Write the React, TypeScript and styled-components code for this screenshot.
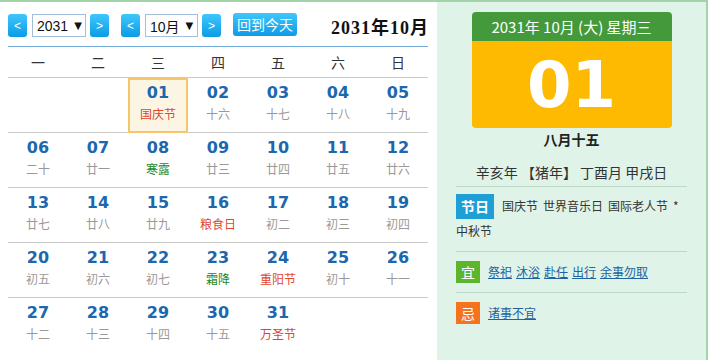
import React from "react";
import styled, { createGlobalStyle } from "styled-components";

const Global = createGlobalStyle`
  html, body { margin: 0; padding: 0; background: #fff; }
  body { font-family: "Noto Sans CJK SC", "Liberation Sans", sans-serif; color: #333; }
`;

const Frame = styled.div`
  width: 708px;
  height: 360px;
  box-sizing: border-box;
  border-top: 2px solid #a2d3a9;
  display: flex;
  overflow: hidden;
`;

const Left = styled.div`
  width: 437px;
  box-sizing: border-box;
  padding-left: 8px;
  padding-right: 9px;
  flex-shrink: 0;
`;

const Toolbar = styled.div`
  height: 45px;
  box-sizing: border-box;
  padding-top: 3px;
  display: flex;
  align-items: center;
  border-bottom: 1px solid #74acd9;
`;

const NavButton = styled.div<{ $gap?: number }>`
  width: 19px;
  height: 23px;
  border-radius: 3px;
  background: linear-gradient(#40c6fb, #0b9ce6);
  color: #fff;
  font-family: "Liberation Sans", sans-serif;
  font-size: 12px;
  display: flex;
  align-items: center;
  justify-content: center;
  margin-right: ${(p) => p.$gap ?? 0}px;
`;

const FakeSelect = styled.div<{ $w: number }>`
  width: ${(p) => p.$w}px;
  height: 23px;
  box-sizing: border-box;
  border: 1px solid #a4bfd9;
  background: #fff;
  display: flex;
  align-items: center;
  padding-left: 4px;
  margin: 0 4px 0 5px;
  font-family: "Liberation Sans", "Noto Sans CJK SC", sans-serif;
  font-size: 14px;
  color: #111;
  gap: 6px;
`;

const Arrow = styled.span`
  font-family: "DejaVu Sans", sans-serif;
  font-size: 10px;
  color: #111;
`;

const TodayButton = styled.div`
  height: 23px;
  padding: 0 4px;
  border-radius: 3px;
  background: linear-gradient(#40c6fb, #0b9ce6);
  color: #fff;
  font-size: 14px;
  line-height: 23px;
  margin-top: -2px;
`;

const Title = styled.div`
  margin-left: auto;
  font-family: "Liberation Serif", "Noto Sans CJK SC", serif;
  font-weight: bold;
  font-size: 18px;
  letter-spacing: 1px;
  color: #111;
  margin-right: -1px;
`;

const Grid = styled.div`
  display: grid;
  grid-template-columns: repeat(7, 60px);
`;

const HeadCell = styled.div`
  height: 30px;
  line-height: 30px;
  text-align: center;
  font-size: 14px;
  color: #333;
  border-bottom: 1px solid #c9c9c9;
`;

const DayCell = styled.div<{ $selected?: boolean; $last?: boolean }>`
  height: 55px;
  box-sizing: border-box;
  border-bottom: ${(p) => (p.$last ? "none" : "1px solid #c9c9c9")};
  padding-top: 5px;
  text-align: center;
  ${(p) =>
    p.$selected &&
    `
    background: #fdf5e4;
    outline: 2px solid #f6c76a;
    outline-offset: -2px;
  `}
`;

const DayNum = styled.div`
  font-family: "DejaVu Sans", sans-serif;
  font-weight: bold;
  font-size: 16px;
  line-height: 20px;
  color: #1c67ae;
`;

type Kind = "normal" | "fest" | "term";

const Lunar = styled.div<{ $kind: Kind }>`
  margin-top: 3px;
  font-size: 12px;
  line-height: 16px;
  color: ${(p) => (p.$kind === "fest" ? "#e2462a" : p.$kind === "term" ? "#23882b" : "#999")};
`;

const Right = styled.div`
  flex: 1;
  background: #e0f3e8;
  border-right: 2px solid #a2d3a9;
  padding: 0 19px;
  display: flex;
  flex-direction: column;
  align-items: stretch;
`;

const DateBox = styled.div`
  width: 200px;
  margin: 10px auto 0;
  border-radius: 4px;
  overflow: hidden;
`;

const DateHead = styled.div`
  height: 29px;
  line-height: 29px;
  background: #449a3b;
  color: #fff;
  font-size: 15px;
  text-align: center;
`;

const DateBig = styled.div`
  height: 87px;
  background: #fdba00;
  color: #fff;
  font-family: "DejaVu Sans", sans-serif;
  font-weight: bold;
  font-size: 64px;
  display: flex;
  align-items: center;
  justify-content: center;
`;

const LunarDate = styled.div`
  text-align: center;
  font-weight: bold;
  font-size: 14px;
  line-height: 22px;
  color: #222;
`;

const GanZhi = styled.div`
  text-align: center;
  font-size: 14px;
  line-height: 22px;
  margin-top: 11px;
  color: #333;
`;

const Section = styled.div<{ $pad: string }>`
  border-top: 1px solid #bcd9c7;
  padding: ${(p) => p.$pad};
`;

const FirstSection = styled(Section)`
  margin-top: 3px;
  font-size: 12px;
  line-height: 24px;
  color: #333;
`;

const Badge = styled.span<{ $bg: string; $w: number; $h: number; $bold?: boolean }>`
  display: inline-block;
  width: ${(p) => p.$w}px;
  height: ${(p) => p.$h}px;
  line-height: ${(p) => p.$h}px;
  background: ${(p) => p.$bg};
  color: #fff;
  font-size: 14px;
  font-weight: ${(p) => (p.$bold ? "bold" : "normal")};
  text-align: center;
  vertical-align: top;
  margin-right: 8px;
`;

const Fest = styled.span`
  white-space: nowrap;
  margin-right: 5px;
`;

const Row = styled.div`
  display: flex;
  align-items: center;
`;

const Links = styled.div`
  display: flex;
  gap: 4px;
  font-size: 12px;
  line-height: 16px;
`;

const Link = styled.a`
  color: #22629f;
  text-decoration: underline;
  cursor: pointer;
`;

type Day = { d: string; l: string; k?: Kind; sel?: boolean } | null;

const weeks: Day[][] = [
  [null, null, { d: "01", l: "国庆节", k: "fest", sel: true }, { d: "02", l: "十六" }, { d: "03", l: "十七" }, { d: "04", l: "十八" }, { d: "05", l: "十九" }],
  [{ d: "06", l: "二十" }, { d: "07", l: "廿一" }, { d: "08", l: "寒露", k: "term" }, { d: "09", l: "廿三" }, { d: "10", l: "廿四" }, { d: "11", l: "廿五" }, { d: "12", l: "廿六" }],
  [{ d: "13", l: "廿七" }, { d: "14", l: "廿八" }, { d: "15", l: "廿九" }, { d: "16", l: "粮食日", k: "fest" }, { d: "17", l: "初二" }, { d: "18", l: "初三" }, { d: "19", l: "初四" }],
  [{ d: "20", l: "初五" }, { d: "21", l: "初六" }, { d: "22", l: "初七" }, { d: "23", l: "霜降", k: "term" }, { d: "24", l: "重阳节", k: "fest" }, { d: "25", l: "初十" }, { d: "26", l: "十一" }],
  [{ d: "27", l: "十二" }, { d: "28", l: "十三" }, { d: "29", l: "十四" }, { d: "30", l: "十五" }, { d: "31", l: "万圣节", k: "fest" }, null, null],
];

const heads = ["一", "二", "三", "四", "五", "六", "日"];

export default function App() {
  return (
    <>
      <Global />
      <Frame>
        <Left>
          <Toolbar>
            <NavButton>&lt;</NavButton>
            <FakeSelect $w={54}>
              2031<Arrow>▼</Arrow>
            </FakeSelect>
            <NavButton $gap={12}>&gt;</NavButton>
            <NavButton>&lt;</NavButton>
            <FakeSelect $w={53}>
              10月<Arrow>▼</Arrow>
            </FakeSelect>
            <NavButton $gap={12}>&gt;</NavButton>
            <TodayButton>回到今天</TodayButton>
            <Title>2031年10月</Title>
          </Toolbar>
          <Grid>
            {heads.map((h) => (
              <HeadCell key={h}>{h}</HeadCell>
            ))}
            {weeks.map((w, wi) =>
              w.map((day, di) => (
                <DayCell key={`${wi}-${di}`} $selected={day?.sel} $last={wi === weeks.length - 1}>
                  {day && (
                    <>
                      <DayNum>{day.d}</DayNum>
                      <Lunar $kind={day.k ?? "normal"}>{day.l}</Lunar>
                    </>
                  )}
                </DayCell>
              ))
            )}
          </Grid>
        </Left>
        <Right>
          <DateBox>
            <DateHead>2031年 10月 (大) 星期三</DateHead>
            <DateBig>01</DateBig>
          </DateBox>
          <LunarDate>八月十五</LunarDate>
          <GanZhi>辛亥年 【猪年】 丁酉月 甲戌日</GanZhi>
          <FirstSection $pad="7px 0 8px">
            <Badge $bg="#1e9fd6" $w={38} $h={25} $bold>
              节日
            </Badge>
            <Fest>国庆节</Fest>
            <Fest>世界音乐日</Fest>
            <Fest>国际老人节</Fest>
            <Fest>*</Fest>
            <Fest>中秋节</Fest>
          </FirstSection>
          <Section $pad="9px 0">
            <Row>
              <Badge $bg="#5cb52c" $w={24} $h={22}>
                宜
              </Badge>
              <Links>
                {["祭祀", "沐浴", "赴任", "出行", "余事勿取"].map((t) => (
                  <Link key={t}>{t}</Link>
                ))}
              </Links>
            </Row>
          </Section>
          <Section $pad="9px 0">
            <Row>
              <Badge $bg="#f4731c" $w={24} $h={22}>
                忌
              </Badge>
              <Links>
                <Link>诸事不宜</Link>
              </Links>
            </Row>
          </Section>
        </Right>
      </Frame>
    </>
  );
}
